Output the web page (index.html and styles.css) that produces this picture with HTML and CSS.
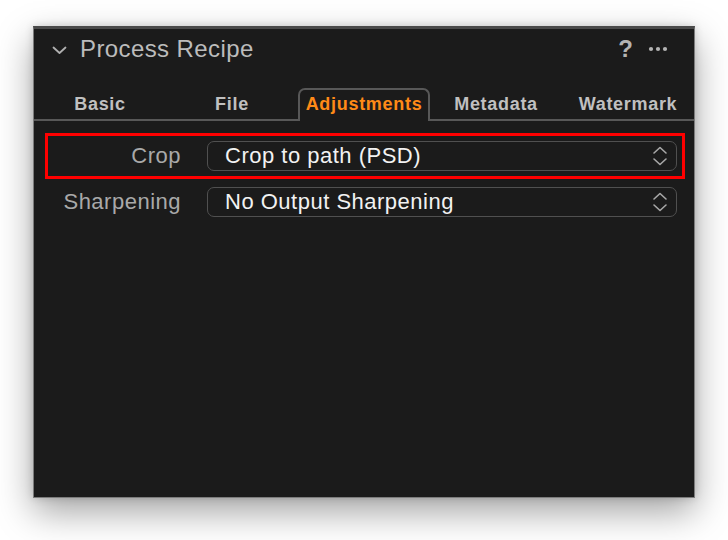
FILE: index.html
```html
<!DOCTYPE html>
<html>
<head>
<meta charset="utf-8">
<link rel="stylesheet" href="styles.css">
</head>
<body>
<div class="panel">
  <div class="header">
    <svg class="chev" width="15" height="9" viewBox="0 0 15 9"><path d="M1.5 1.5 L7.5 7 L13.5 1.5" fill="none" stroke="#b0b0b0" stroke-width="1.8" stroke-linecap="round" stroke-linejoin="round"/></svg>
    <span class="title">Process Recipe</span>
    <span class="spacer"></span>
    <span class="help">?</span>
    <svg class="more" width="20" height="6" viewBox="0 0 20 6"><circle cx="3" cy="3" r="2.1" fill="#b4b4b4"/><circle cx="10" cy="3" r="2.1" fill="#b4b4b4"/><circle cx="17" cy="3" r="2.1" fill="#b4b4b4"/></svg>
  </div>
  <div class="tabs">
    <div class="tab">Basic</div>
    <div class="tab">File</div>
    <div class="tab active">Adjustments</div>
    <div class="tab">Metadata</div>
    <div class="tab">Watermark</div>
  </div>
  <div class="rows">
    <div class="row highlight">
      <div class="label">Crop</div>
      <div class="select"><span>Crop to path (PSD)</span>
        <svg class="updown" width="16" height="20" viewBox="0 0 16 20"><path d="M2 7 L8 1.5 L14 7 M2 13 L8 18.5 L14 13" fill="none" stroke="#a8a8a8" stroke-width="1.6" stroke-linecap="round" stroke-linejoin="round"/></svg>
      </div>
    </div>
    <div class="row">
      <div class="label">Sharpening</div>
      <div class="select"><span>No Output Sharpening</span>
        <svg class="updown" width="16" height="20" viewBox="0 0 16 20"><path d="M2 7 L8 1.5 L14 7 M2 13 L8 18.5 L14 13" fill="none" stroke="#a8a8a8" stroke-width="1.6" stroke-linecap="round" stroke-linejoin="round"/></svg>
      </div>
    </div>
  </div>
</div>
</body>
</html>
```
FILE: styles.css
```css
* { box-sizing: border-box; }
html, body { margin: 0; padding: 0; background: #ffffff; }
body {
  font-family: "Liberation Sans", Arial, sans-serif;
  padding: 26px 0 42px 33px;
  min-height: 540px;
}

.panel {
  width: 662px;
  height: 472px;
  background: #1b1b1b;
  border: 1px solid #7c7c7c;
  border-top: 3px solid #4a4a4a;
  box-shadow: 0 14px 34px rgba(0,0,0,0.36), 0 0 8px rgba(0,0,0,0.16);
}

.header {
  display: flex;
  align-items: center;
  height: 40px;
  padding: 0 26px 0 18px;
}
.chev { margin-top: 2px; }
.title {
  margin-left: 13px;
  color: #bcbcbc;
  font-size: 24px;
  letter-spacing: 0.4px;
}
.spacer { flex: 1; }
.help {
  color: #b4b4b4;
  font-size: 24px;
  font-weight: bold;
}
.more {
  margin-left: 15px;
  display: block;
}

.tabs {
  margin-top: 19px;
  display: grid;
  grid-template-columns: repeat(5, 1fr);
  border-bottom: 2px solid #585858;
  height: 33px;
}
.tab {
  text-align: center;
  color: #c0c0c0;
  font-size: 18px;
  font-weight: bold;
  letter-spacing: 0.7px;
  padding-top: 6px;
  height: 33px;
}
.tab.active {
  color: #ff8a17;
  border: 2px solid #585858;
  border-bottom: none;
  border-radius: 7px 7px 0 0;
  background: #1b1b1b;
  padding-top: 4px;
}

.rows {
  padding: 12px 0 0 11px;
}
.row {
  width: 640px;
  border: 3px solid transparent;
  padding: 5px 5px 5px 0;
  display: grid;
  grid-template-columns: 133px 470px;
  column-gap: 26px;
  align-items: center;
}
.row.highlight { border-color: #ff0000; }
.label {
  text-align: right;
  color: #a9a9a9;
  font-size: 22px;
  letter-spacing: 0.5px;
}
.select {
  height: 30px;
  border: 1.5px solid #505050;
  border-radius: 7px;
  display: flex;
  align-items: center;
  padding: 0 8px 0 17px;
  color: #f2f2f2;
  font-size: 22px;
  letter-spacing: 0.5px;
}
.select span { flex: 1; }
.updown { display: block; }
```
